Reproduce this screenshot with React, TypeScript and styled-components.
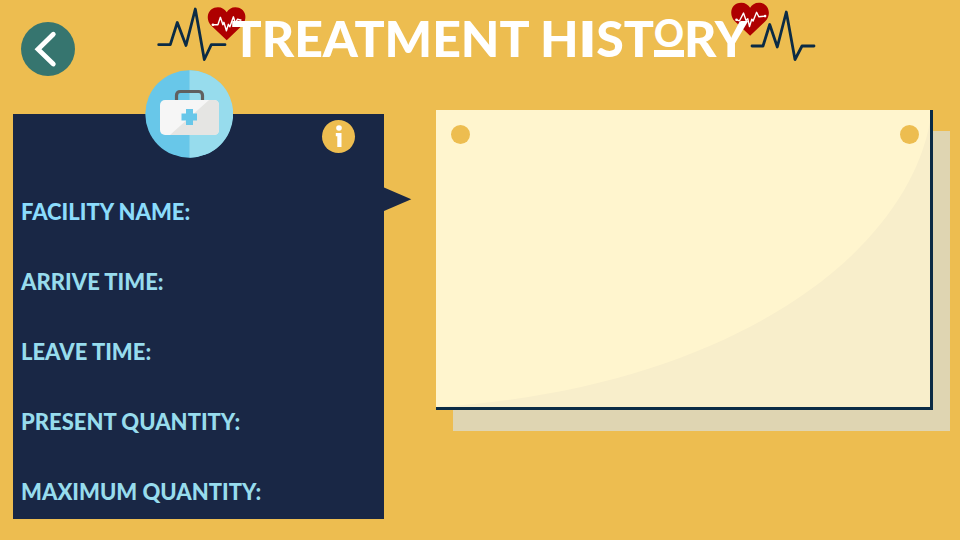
import React from "react";
import styled, { createGlobalStyle } from "styled-components";

const color = {
  amber: "#edbd50",
  navy: "#192745",
  ink: "#0b2b45",
  teal: "#36756f",
  sky: "#68c7e9",
  ice: "#97dced",
  iceBright: "#8bdcfc",
  cream: "#fff5ce",
  creamShade: "#f8eecb",
  shadow: "#dfd5b2",
  red: "#ae0000",
};

const GlobalStyle = createGlobalStyle`
  *, *::before, *::after { box-sizing: border-box; }
  body {
    margin: 0;
    background: ${color.amber};
    font-family: Lato, "Liberation Sans", sans-serif;
  }
`;

const Page = styled.div`
  min-height: 100vh;
  overflow-x: hidden;
`;

const Header = styled.header`
  display: grid;
  grid-template-columns: 54px 1fr;
  align-items: start;
  height: 110px;
  padding: 0 56px 0 21px;
`;

const BackButton = styled.button`
  width: 54px;
  height: 54px;
  margin-top: 22px;
  padding: 0;
  border: 0;
  border-radius: 50%;
  background: ${color.teal};
  cursor: pointer;

  svg {
    display: block;
  }
`;

const Banner = styled.div`
  position: relative;
  justify-self: center;
`;

const Title = styled.h1`
  position: relative;
  margin: 0;
  padding-top: 8px;
  font-size: 50px;
  font-weight: 900;
  line-height: 60px;
  color: #fff;
  white-space: nowrap;
`;

const SlabLetter = styled.span`
  font-family: "Open Sans", sans-serif;
  font-weight: 800;
`;

const BarredLetter = styled.span`
  display: inline-block;
  border-bottom: 7px solid #fff;
  font-size: 37px;
  line-height: 34px;
  vertical-align: 10px;
`;

const Ornament = styled.svg<{ $side: "left" | "right" }>`
  position: absolute;
  top: 0;
  ${(p) => (p.$side === "left" ? "right" : "left")}: calc(100% - 18px);
`;

const Main = styled.main`
  display: grid;
  grid-template-columns: 371fr 497fr;
  column-gap: 52px;
  align-items: start;
  padding: 0 27px 20px 13px;
`;

const Panel = styled.section`
  position: relative;
  margin-top: 4px;
  padding: 84px 8px 13px;
  background: ${color.navy};
`;

const PanelArrow = styled.svg`
  position: absolute;
  top: 73px;
  left: 100%;
`;

const KitBadge = styled.svg`
  position: absolute;
  top: -44px;
  left: 132px;
`;

const InfoButton = styled.button`
  position: absolute;
  top: 6px;
  right: 29px;
  width: 33px;
  height: 33px;
  padding: 0;
  border: 0;
  border-radius: 50%;
  background: ${color.amber};
  cursor: pointer;

  svg {
    display: block;
  }
`;

const Fields = styled.dl`
  display: grid;
  row-gap: 42px;
  margin: 0;
`;

const Field = styled.div`
  display: flex;
  gap: 8px;
`;

const FieldName = styled.dt<{ $bright?: boolean }>`
  font-size: 22px;
  font-weight: 900;
  line-height: 28px;
  color: ${(p) => (p.$bright ? color.iceBright : color.ice)};
  white-space: nowrap;
`;

const FieldValue = styled.dd`
  flex: 1;
  margin: 0;
  color: #fff;
`;

const Note = styled.section`
  position: relative;
  display: flex;
  justify-content: space-between;
  aspect-ratio: 497 / 300;
  padding: 15px 11px 0 15px;
  border: solid ${color.ink};
  border-width: 0 3px 3px 0;
  background: ${color.cream};
  box-shadow: 17px 21px ${color.shadow};
`;

const NoteShade = styled.svg`
  position: absolute;
  inset: 0;
  width: 100%;
  height: 100%;
`;

const Pin = styled.span`
  position: relative;
  width: 19px;
  height: 19px;
  border-radius: 50%;
  background: ${color.amber};
`;

function Heart({ x, y, trace, dots }: { x: number; y: number; trace: string; dots: number[][] }) {
  return (
    <g transform={`translate(${x} ${y})`}>
      <path
        d="M19.3 33 L4 18.5 C-2.5 12 0 0 10.5 0 C14.5 0 17.5 2 19.3 5 C21 2 24 0 28 0 C38.5 0 41 12 34.5 18.5 Z"
        fill={color.red}
      />
      <polyline points={trace} fill="none" stroke="#fff" strokeWidth="1.4" strokeLinejoin="round" />
      {dots.map(([cx, cy]) => (
        <circle key={cx} cx={cx} cy={cy} r="1.3" fill="#fff" />
      ))}
    </g>
  );
}

function Pulse({ points }: { points: string }) {
  return (
    <polyline
      points={points}
      fill="none"
      stroke={color.ink}
      strokeWidth="2.8"
      strokeLinecap="round"
      strokeLinejoin="round"
    />
  );
}

const fields = ["FACILITY NAME:", "ARRIVE TIME:", "LEAVE TIME:", "PRESENT QUANTITY:", "MAXIMUM QUANTITY:"];

export default function App() {
  return (
    <>
      <GlobalStyle />
      <Page>
        <Header>
          <BackButton type="button" aria-label="Back">
            <svg width="54" height="54" viewBox="0 0 54 54" fill="none" aria-hidden="true">
              <path
                d="M32.3 12.3 L17 27.3 L32.3 42"
                stroke="#fff"
                strokeWidth="4.8"
                strokeLinecap="round"
              />
            </svg>
          </BackButton>
          <Banner>
            <Ornament $side="left" width="92" height="64" viewBox="157 0 92 64" aria-hidden="true">
              <Pulse points="158.7,44.7 170.3,44.7 177.3,22.5 186,45.5 195.3,9 204.3,59.5 211.3,44.7 225,44.7" />
              <Heart
                x={207.4}
                y={7.3}
                trace="5.5,17.5 10.5,17.5 13,10 15.5,17.5 16.5,15 19,23.5 21,17 22.5,19.5 26,9.5 28,16 30,12 34,13"
                dots={[[5.5, 17.5]]}
              />
            </Ornament>
            <Ornament $side="right" width="86" height="64" viewBox="729 0 86 64" aria-hidden="true">
              <Pulse points="751,46 762,46 768.7,24.5 776.3,47 785.3,12 794,59.5 801,46 813,46" />
              <Heart
                x={729.8}
                y={2.8}
                trace="5.7,17 8.7,18 12.7,10.3 15.3,17.7 17,16 18.7,23.7 21,16.3 22.3,18.3 25.8,9.5 28,14 34.3,13.3"
                dots={[
                  [5.7, 17],
                  [34.3, 13.3],
                ]}
              />
            </Ornament>
            <Title>
              TREATMENT H<SlabLetter>I</SlabLetter>ST<BarredLetter>O</BarredLetter>RY
            </Title>
          </Banner>
        </Header>

        <Main>
          <Panel aria-label="Treatment details">
            <KitBadge width="88" height="88" viewBox="0 0 88 88" aria-hidden="true">
              <circle cx="44" cy="44" r="43.7" fill={color.sky} />
              <path d="M44.5 0.3 A43.7 43.7 0 0 1 44.5 87.7 Z" fill={color.ice} />
              <path
                d="M31.5 31 V25.5 Q31.5 21.5 35.5 21.5 H53.5 Q57.5 21.5 57.5 25.5 V31"
                fill="none"
                stroke="#606060"
                strokeWidth="3.2"
              />
              <rect x="15" y="30" width="59" height="35" rx="5" fill="#f6f6f6" />
              <path d="M64 30 H69 Q74 30 74 35 V60 Q74 65 69 65 H25 Z" fill="#e5e5e3" />
              <path
                d="M41 39 H48 V43.5 H52 V50.5 H48 V55 H41 V50.5 H36.5 V43.5 H41 Z"
                fill={color.sky}
              />
            </KitBadge>
            <InfoButton type="button" aria-label="Information">
              <svg width="33" height="33" viewBox="0 0 33 33" aria-hidden="true">
                <circle cx="17" cy="8" r="2.8" fill="#fff" />
                <path d="M13.8 13 H19.5 V27 H15.3 V16.3 H13.8 Z" fill="#fff" />
              </svg>
            </InfoButton>
            <Fields>
              {fields.map((name, i) => (
                <Field key={name}>
                  <FieldName $bright={i === 0}>{name}</FieldName>
                  <FieldValue />
                </Field>
              ))}
            </Fields>
            <PanelArrow width="28" height="25" viewBox="0 0 28 25" aria-hidden="true">
              <path d="M0 0.5 L27.3 12.3 L0 24 Z" fill={color.navy} />
            </PanelArrow>
          </Panel>

          <Note aria-label="Treatment notes">
            <NoteShade viewBox="0 0 494 297" preserveAspectRatio="none" aria-hidden="true">
              <path d="M496 0 C478 145 290 279 0 297 H494 V0 Z" fill={color.creamShade} />
            </NoteShade>
            <Pin />
            <Pin />
          </Note>
        </Main>
      </Page>
    </>
  );
}
